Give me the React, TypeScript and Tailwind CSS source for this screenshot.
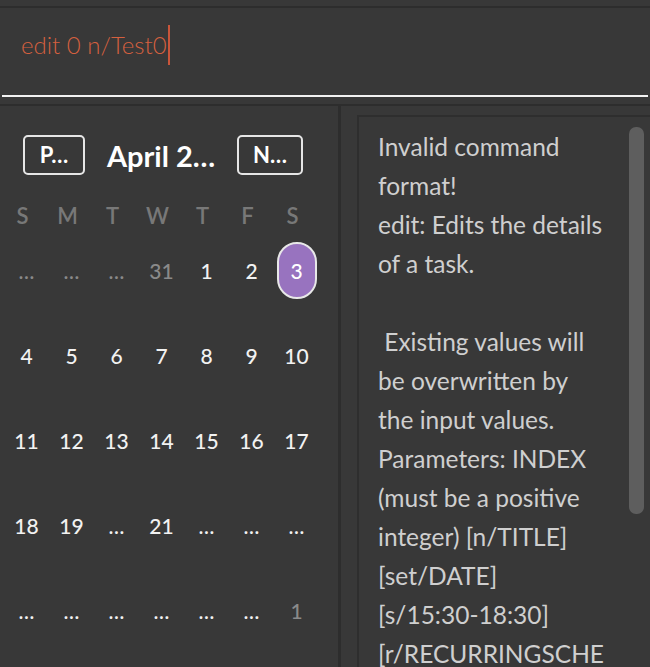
const weekDays = ['S', 'M', 'T', 'W', 'T', 'F', 'S'];

type Day = { label: string; dim?: boolean; selected?: boolean };

const rows: Day[][] = [
    [
        { label: '…', dim: true },
        { label: '…', dim: true },
        { label: '…', dim: true },
        { label: '31', dim: true },
        { label: '1' },
        { label: '2' },
        { label: '3', selected: true },
    ],
    ['4', '5', '6', '7', '8', '9', '10'].map((label) => ({ label })),
    ['11', '12', '13', '14', '15', '16', '17'].map((label) => ({ label })),
    ['18', '19', '…', '21', '…', '…', '…'].map((label) => ({ label })),
    [
        { label: '…' },
        { label: '…' },
        { label: '…' },
        { label: '…' },
        { label: '…' },
        { label: '…' },
        { label: '1', dim: true },
    ],
];

const resultLines = [
    'Invalid command',
    'format!',
    'edit: Edits the details',
    'of a task.',
    '',
    '\u00a0Existing values will',
    'be overwritten by',
    'the input values.',
    'Parameters: INDEX',
    '(must be a positive',
    'integer) [n/TITLE]',
    '[set/DATE]',
    '[s/15:30-18:30]',
    '[r/RECURRINGSCHE',
];

function DayCell({ day }: { day: Day }) {
    if (day.selected) {
        return (
            <div className="flex items-center justify-center">
                <div className="w-[40px] h-[57px] rounded-full border-2 border-[#e8e8e8] bg-[#9873bf] flex items-center justify-center text-[21px] font-medium text-white">
                    {day.label}
                </div>
            </div>
        );
    }

    return (
        <div
            className={`flex items-center justify-center text-[21px] font-medium ${
                day.dim ? 'text-[#8a8a8a]' : 'text-[#f2f2f2]'
            }`}
        >
            {day.label}
        </div>
    );
}

function Calendar() {
    return (
        <div className="w-[338px] shrink-0 flex flex-col">
            <div className="flex items-center pt-[29px] pl-[23px]">
                <button className="w-[62px] h-[40px] rounded-[5px] border-2 border-[#e6e6e6] text-white font-bold text-[22px] leading-none">
                    P…
                </button>
                <div className="w-[152px] text-center text-white font-bold text-[29px] leading-none">April 2…</div>
                <button className="w-[66px] h-[40px] rounded-[5px] border-2 border-[#e6e6e6] text-white font-bold text-[22px] leading-none">
                    N…
                </button>
            </div>

            <div className="grid grid-cols-7 w-[315px] mt-[24px] h-[28px]">
                {weekDays.map((d, i) => (
                    <div key={i} className="flex items-center justify-center text-[22px] font-semibold text-[#787878]">
                        {d}
                    </div>
                ))}
            </div>

            <div className="grid grid-cols-7 auto-rows-[85px] w-[315px] ml-[4px] mt-[1px]">
                {rows.flat().map((day, i) => (
                    <DayCell key={i} day={day} />
                ))}
            </div>
        </div>
    );
}

export default function App() {
    return (
        <div className="w-[650px] h-[667px] overflow-hidden bg-[#383838] flex flex-col font-['Lato',sans-serif]">
            <div className="h-[8px] shrink-0 border-b-2 border-[#2d2d2d]" />

            <div className="h-[87px] shrink-0 flex items-start pl-[21px] pt-[17px]">
                <span className="text-[24px] leading-[40px] font-light text-[#d5603f]">edit 0 n/Test0</span>
                <span className="ml-[1px] w-[2px] h-[40px] bg-[#c9553a]" />
            </div>
            <div className="mx-[2px] h-[2px] shrink-0 bg-[#f2f2f2]" />

            <div className="h-[9px] shrink-0 border-b-2 border-[#2d2d2d]" />

            <div className="flex flex-1 min-h-0">
                <Calendar />
                <div className="w-[3px] shrink-0 bg-[#2d2d2d]" />
                <div className="flex-1 pl-[16px] pt-[9px] min-w-0">
                    <div className="relative h-full border-l-2 border-t-2 border-[#2e2e2e] pl-[19px] pt-[10px]">
                        {resultLines.map((line, i) => (
                            <div key={i} className="h-[39px] whitespace-pre text-[24.5px] leading-[39px] text-[#cfcfcf]">
                                {line}
                            </div>
                        ))}
                        <div className="absolute right-[6px] top-[10px] w-[15px] h-[387px] rounded-[7px] bg-[#5e5e5e]" />
                    </div>
                </div>
            </div>
        </div>
    );
}
